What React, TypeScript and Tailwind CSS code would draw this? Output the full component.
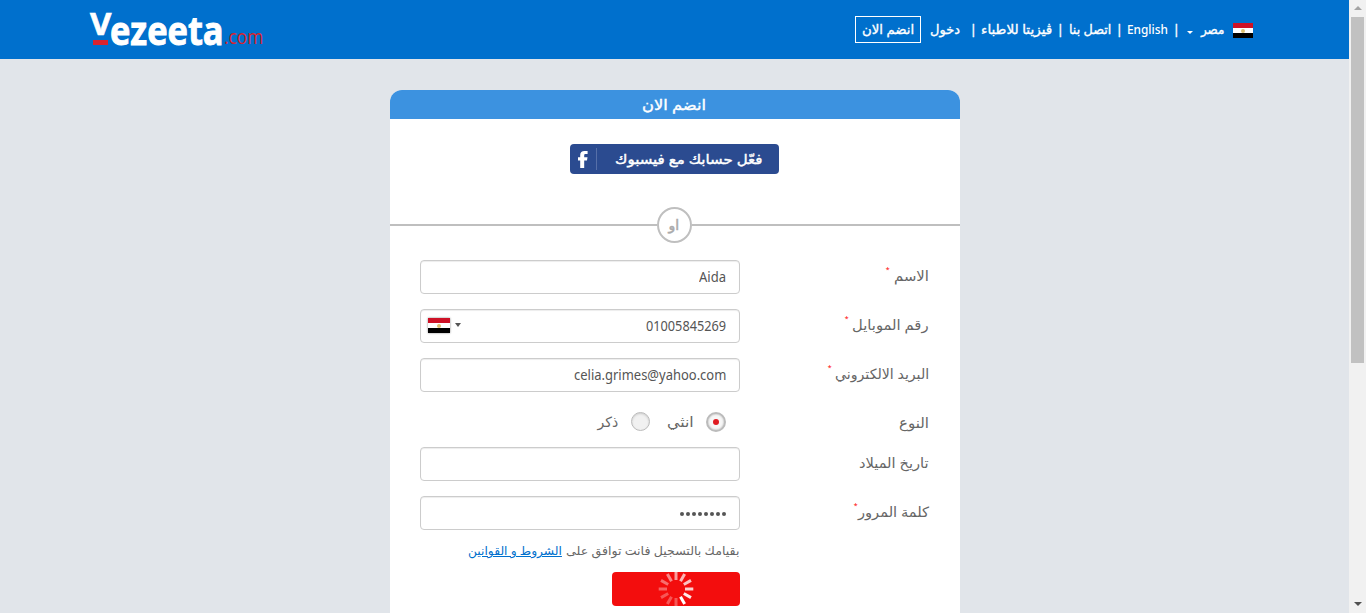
import React, { useLayoutEffect, useRef, useState } from "react";

/** Single line of text, condensed or widened to fill the width of its box. */
function Fit({ className = "", dir = "rtl", children }: { className?: string; dir?: "rtl" | "ltr"; children: React.ReactNode }) {
  const box = useRef<HTMLSpanElement>(null);
  const text = useRef<HTMLSpanElement>(null);
  const [scale, setScale] = useState(1);
  useLayoutEffect(() => {
    if (box.current && text.current) setScale(box.current.clientWidth / text.current.offsetWidth);
  }, []);
  return (
    <span ref={box} dir="ltr" className={"block shrink-0 whitespace-nowrap " + className}>
      <span ref={text} dir={dir} className="inline-block origin-left" style={{ transform: `scaleX(${scale})` }}>
        {children}
      </span>
    </span>
  );
}

function Flag({ className = "" }: { className?: string }) {
  return (
    <span className={"flex shrink-0 flex-col " + className}>
      <span className="flex-1 bg-[#ce1126]" />
      <span className="flex flex-1 items-center justify-center bg-white">
        <span className="h-[4px] w-[4px] rounded-sm bg-[#dcc070]" />
      </span>
      <span className="flex-1 bg-black" />
    </span>
  );
}

function Bar({ className = "" }: { className?: string }) {
  return <span className={"block w-1 shrink-0 text-center text-[12px] " + className}>|</span>;
}

function Field({ value, children }: { value?: string; children?: React.ReactNode }) {
  return (
    <div className="flex h-[34px] w-80 items-center justify-between rounded-[4px] border border-[#ccc] bg-white pr-[12px] pb-[2px] pl-[7px] shadow-[inset_0_1px_1px_rgba(0,0,0,0.075)]">
      <div className="flex items-center">{children}</div>
      {value}
    </div>
  );
}

function Row({ label, width, star, starClass = "mr-[3px]", className = "h-[34px]", children }: {
  label: string; width: string; star?: boolean; starClass?: string; className?: string; children?: React.ReactNode;
}) {
  return (
    <div className={"mb-[15px] flex justify-between " + className}>
      {children}
      <div className="mr-px flex h-[31px] items-center text-[14px] text-[#666]">
        {star && <span className={"-mt-3 h-5 text-[7px] leading-5 text-[#f00] " + starClass}>*</span>}
        <Fit className={width}>{label}</Fit>
      </div>
    </div>
  );
}

function Spinner() {
  const opacities = [0.6, 0.7, 0.75, 0.8, 0.9, 1, 0.3, 0.3, 0.3, 0.35, 0.4, 0.5];
  return (
    <svg width="36" height="36" viewBox="-18 -18 36 36">
      {opacities.map((o, i) => (
        <line key={i} x1="0" y1="-9" x2="0" y2="-17.3" stroke="#fff" strokeWidth="3" opacity={o} transform={`rotate(${i * 30})`} />
      ))}
    </svg>
  );
}

export default function App() {
  return (
    <div className="flex h-[613px] w-[1366px] overflow-hidden bg-[#e1e5ea] font-['Noto_Sans','DejaVu_Sans',sans-serif] text-[14px] text-[#555]">
      <div className="flex w-[1349px] flex-col items-center">
        <header className="flex h-[59px] w-full items-center bg-[#0070cd] pl-[90px] text-white">
          <div className="flex h-[59px] w-[174px] items-start pt-[13px]">
            <div className="flex w-5 flex-col items-start">
              <Fit dir="ltr" className="h-[27px] w-[22px] font-['Open_Sans',sans-serif] text-[30px] leading-[21px] font-bold [-webkit-text-stroke:0.6px_white]">V</Fit>
              <span className="ml-[3px] block h-[5px] w-[15px] bg-[#d9232e]" />
            </div>
            <Fit dir="ltr" className="w-[114px] font-['Open_Sans',sans-serif] text-[39px] leading-[33px] font-bold [-webkit-text-stroke:0.9px_white]">ezeeta</Fit>
            <Fit dir="ltr" className="w-[39px] pt-[4px] font-['Open_Sans',sans-serif] text-[20px] leading-[40px] text-[#d9232e]">.com</Fit>
          </div>
          <nav className="ml-[591px] flex h-[27px] items-center text-[13px] font-medium [-webkit-text-stroke:0.35px_white]">
            <a className="flex h-[27px] w-[66px] items-center justify-center border border-white">
              <Fit className="w-[52px]">انضم الان</Fit>
            </a>
            <Fit className="ml-[9px] w-[30px]">دخول</Fit>
            <Bar className="ml-[10px]" />
            <Fit className="ml-[7px] w-[71px]">ڤيزيتا للاطباء</Fit>
            <Bar className="ml-[5px]" />
            <Fit className="ml-[8px] w-[42px]">اتصل بنا</Fit>
            <Bar className="ml-[5px]" />
            <Fit dir="ltr" className="ml-[7px] w-[41px] [-webkit-text-stroke:0]">English</Fit>
            <Bar className="ml-[5px]" />
            <span className="mt-[5px] ml-[10px] border-x-[3px] border-t-[3px] border-x-transparent border-t-white" />
            <Fit className="ml-[8px] w-[23px]">مصر</Fit>
            <Flag className="mt-[2px] ml-[9px] h-[15px] w-5" />
          </nav>
        </header>

        <main className="mt-[31px] h-[523px] w-[570px] shrink-0 overflow-hidden rounded-t-[12px] bg-white">
          <h1 className="flex h-[29px] items-center justify-center bg-[#3c92e0] text-[15px] font-medium text-white [-webkit-text-stroke:0.4px_white]">
            <Fit className="mr-px w-[64px]">انضم الان</Fit>
          </h1>
          <div className="flex h-[88px] justify-center pr-px pt-[25px]">
            <button className="flex h-[30px] w-[209px] items-center rounded-[4px] bg-[#2b4b90] text-white">
              <svg className="ml-[8px] h-[17px] w-[10px] shrink-0" viewBox="0 0 10 17">
                <path fill="#fff" d="M2.2 17V9.6H0V6.3h2.2V4.2C2.2 1.4 3.8 0 6.5 0h3.1v3.1H7.8c-1.2 0-1.6.5-1.6 1.4v1.8h3.3L9 9.6H6.2V17z" />
              </svg>
              <span className="ml-[8px] h-[22px] w-px shrink-0 bg-[#566fa8]" />
              <Fit className="ml-[18px] w-[148px] text-left text-[13.5px] font-medium [-webkit-text-stroke:0.4px_white]">فعّل حسابك مع فيسبوك</Fit>
            </button>
          </div>
          <div className="flex h-[36px] items-center text-[#aaa]">
            <span className="h-[2px] flex-1 bg-[#bfbfbf]" />
            <span className="flex h-[36px] w-[35px] items-center justify-center rounded-[50%] border-2 border-[#bfbfbf] pb-[2px]">
              <Fit className="w-[11px] text-[14px] font-medium [-webkit-text-stroke:0.5px_#aaa]">او</Fit>
            </span>
            <span className="h-[2px] w-[268px] bg-[#bfbfbf]" />
          </div>

          <form className="px-[30px] pt-[17px]">
            <Row label="الاسم" width="w-[35px]" star starClass="mr-[4px]">
              <Field><Fit dir="ltr" className="ml-[271px] w-[27px]">Aida</Fit></Field>
            </Row>
            <Row label="رقم الموبايل" width="w-[77px]" star starClass="mr-[3px]">
              <Field>
                <Flag className="mt-px h-[15px] w-[22px] shadow-[0_0_2px_#888]" />
                <span className="ml-[5px] border-x-[3px] border-t-4 border-x-transparent border-t-[#555]" />
                <Fit dir="ltr" className="ml-[185px] w-[80px]">01005845269</Fit>
              </Field>
            </Row>
            <Row label="البريد الالكتروني" width="w-[94px]" star>
              <Field><Fit dir="ltr" className="ml-[146px] w-[152px]">celia.grimes@yahoo.com</Fit></Field>
            </Row>
            <Row label="النوع" width="w-[30px]" className="h-[25px]">
              <div className="flex h-[29px] items-center pl-[178px] text-[#666]">
                <Fit className="w-[21px]">ذكر</Fit>
                <span className="ml-[12px] h-[19px] w-[19px] rounded-full border border-[#bbb] bg-[#f1f1f1] shadow-[inset_0_1px_2px_#ccc]" />
                <Fit className="ml-[17px] w-[27px]">انثي</Fit>
                <span className="ml-[12px] flex h-5 w-5 items-center justify-center rounded-full border-2 border-[#bbb] bg-[#f7f7f7] shadow-[inset_0_0_2px_#aaa]">
                  <span className="h-[6px] w-[6px] rounded-full bg-[#e01b22]" />
                </span>
              </div>
            </Row>
            <Row label="تاريخ الميلاد" width="w-[70px]"><Field /></Row>
            <Row label="كلمة المرور" width="w-[71px]" star starClass="mr-0">
              <Field>
                <span className="ml-[252px] flex gap-[2px] pt-[3px]">
                  {Array.from({ length: 8 }, (_, i) => <span key={i} className="h-[4px] w-[4px] rounded-full bg-[#555]" />)}
                </span>
              </Field>
            </Row>
            <p className="-mt-[4px] flex h-[20px] items-center text-[12px]">
              <Fit className="ml-[48px] w-[94px] text-[#0070cd]"><span className="underline">الشروط و القوانين</span></Fit>
              <Fit className="ml-[4px] w-[173px] text-[#666]">بقيامك بالتسجيل فانت توافق على</Fit>
            </p>
            <button type="button" className="mt-[11px] ml-[192px] flex h-[34px] w-[128px] items-center justify-center rounded-[4px] bg-[#f30d0d]">
              <Spinner />
            </button>
          </form>
        </main>
      </div>

      <aside className="flex w-[17px] flex-col items-center bg-[#f1f1f1]">
        <span className="mt-[6px] border-x-4 border-b-4 border-x-transparent border-b-[#a3a3a3]" />
        <span className="mt-[7px] h-[346px] w-[13px] bg-[#c1c1c1]" />
        <span className="mt-auto mb-[7px] border-x-4 border-t-4 border-x-transparent border-t-[#505050]" />
      </aside>
    </div>
  );
}
